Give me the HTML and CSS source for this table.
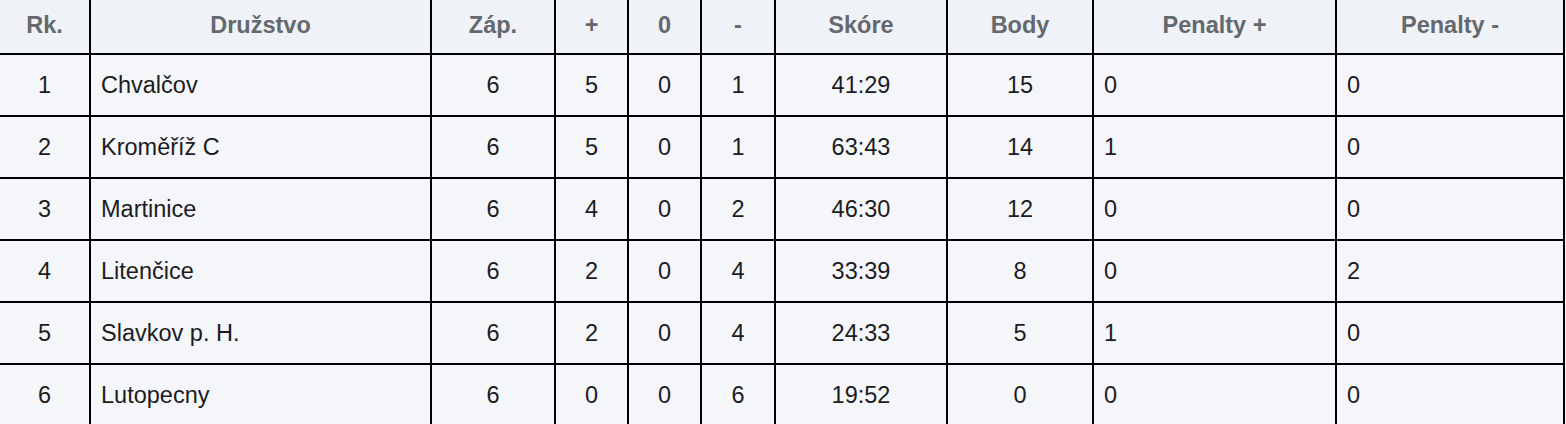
FILE: index.html
```html
<!DOCTYPE html>
<html lang="cs">
<head>
<meta charset="utf-8">
<title>Tabulka</title>
<link rel="stylesheet" href="styles.css">
</head>
<body>
<table class="standings">
  <colgroup>
    <col class="c-rk"><col class="c-team"><col class="c-zap"><col class="c-w"><col class="c-d"><col class="c-l"><col class="c-score"><col class="c-pts"><col class="c-penp"><col class="c-penm">
  </colgroup>
  <thead>
    <tr>
      <th>Rk.</th><th>Družstvo</th><th>Záp.</th><th>+</th><th>0</th><th>-</th><th>Skóre</th><th>Body</th><th>Penalty +</th><th>Penalty -</th>
    </tr>
  </thead>
  <tbody>
    <tr><td class="ctr">1</td><td class="lft">Chvalčov</td><td class="ctr">6</td><td class="ctr">5</td><td class="ctr">0</td><td class="ctr">1</td><td class="ctr">41:29</td><td class="ctr">15</td><td class="lft">0</td><td class="lft">0</td></tr>
    <tr><td class="ctr">2</td><td class="lft">Kroměříž C</td><td class="ctr">6</td><td class="ctr">5</td><td class="ctr">0</td><td class="ctr">1</td><td class="ctr">63:43</td><td class="ctr">14</td><td class="lft">1</td><td class="lft">0</td></tr>
    <tr><td class="ctr">3</td><td class="lft">Martinice</td><td class="ctr">6</td><td class="ctr">4</td><td class="ctr">0</td><td class="ctr">2</td><td class="ctr">46:30</td><td class="ctr">12</td><td class="lft">0</td><td class="lft">0</td></tr>
    <tr><td class="ctr">4</td><td class="lft">Litenčice</td><td class="ctr">6</td><td class="ctr">2</td><td class="ctr">0</td><td class="ctr">4</td><td class="ctr">33:39</td><td class="ctr">8</td><td class="lft">0</td><td class="lft">2</td></tr>
    <tr><td class="ctr">5</td><td class="lft">Slavkov p. H.</td><td class="ctr">6</td><td class="ctr">2</td><td class="ctr">0</td><td class="ctr">4</td><td class="ctr">24:33</td><td class="ctr">5</td><td class="lft">1</td><td class="lft">0</td></tr>
    <tr><td class="ctr">6</td><td class="lft">Lutopecny</td><td class="ctr">6</td><td class="ctr">0</td><td class="ctr">0</td><td class="ctr">6</td><td class="ctr">19:52</td><td class="ctr">0</td><td class="lft">0</td><td class="lft">0</td></tr>
  </tbody>
</table>
</body>
</html>
```

FILE: styles.css
```css
html, body {
  margin: 0;
  padding: 0;
  background: #f4f6fa;
  overflow: hidden;
}

.standings {
  border-collapse: collapse;
  table-layout: fixed;
  width: 1567px;
  margin: -2px 0 0 -2px;
  font-family: "Liberation Sans", Arial, sans-serif;
  font-size: 23.5px;
  color: #1c1c1e;
}

.c-rk { width: 91px; }
.c-team { width: 341px; }
.c-zap { width: 124px; }
.c-w { width: 73px; }
.c-d { width: 73px; }
.c-l { width: 74px; }
.c-score { width: 172px; }
.c-pts { width: 146px; }
.c-penp { width: 243px; }
.c-penm { width: 228px; }

.standings th,
.standings td {
  border: 2px solid #000;
  padding: 0 10px;
  white-space: nowrap;
  overflow: hidden;
}

.standings thead th {
  background: #eff2f7;
  color: #65686d;
  font-weight: bold;
  text-align: center;
  height: 55px;
  padding-bottom: 3px;
  box-sizing: border-box;
}

.standings tbody td {
  background: #f5f6fa;
  height: 60px;
}

.ctr { text-align: center; }
.lft { text-align: left; }
```
